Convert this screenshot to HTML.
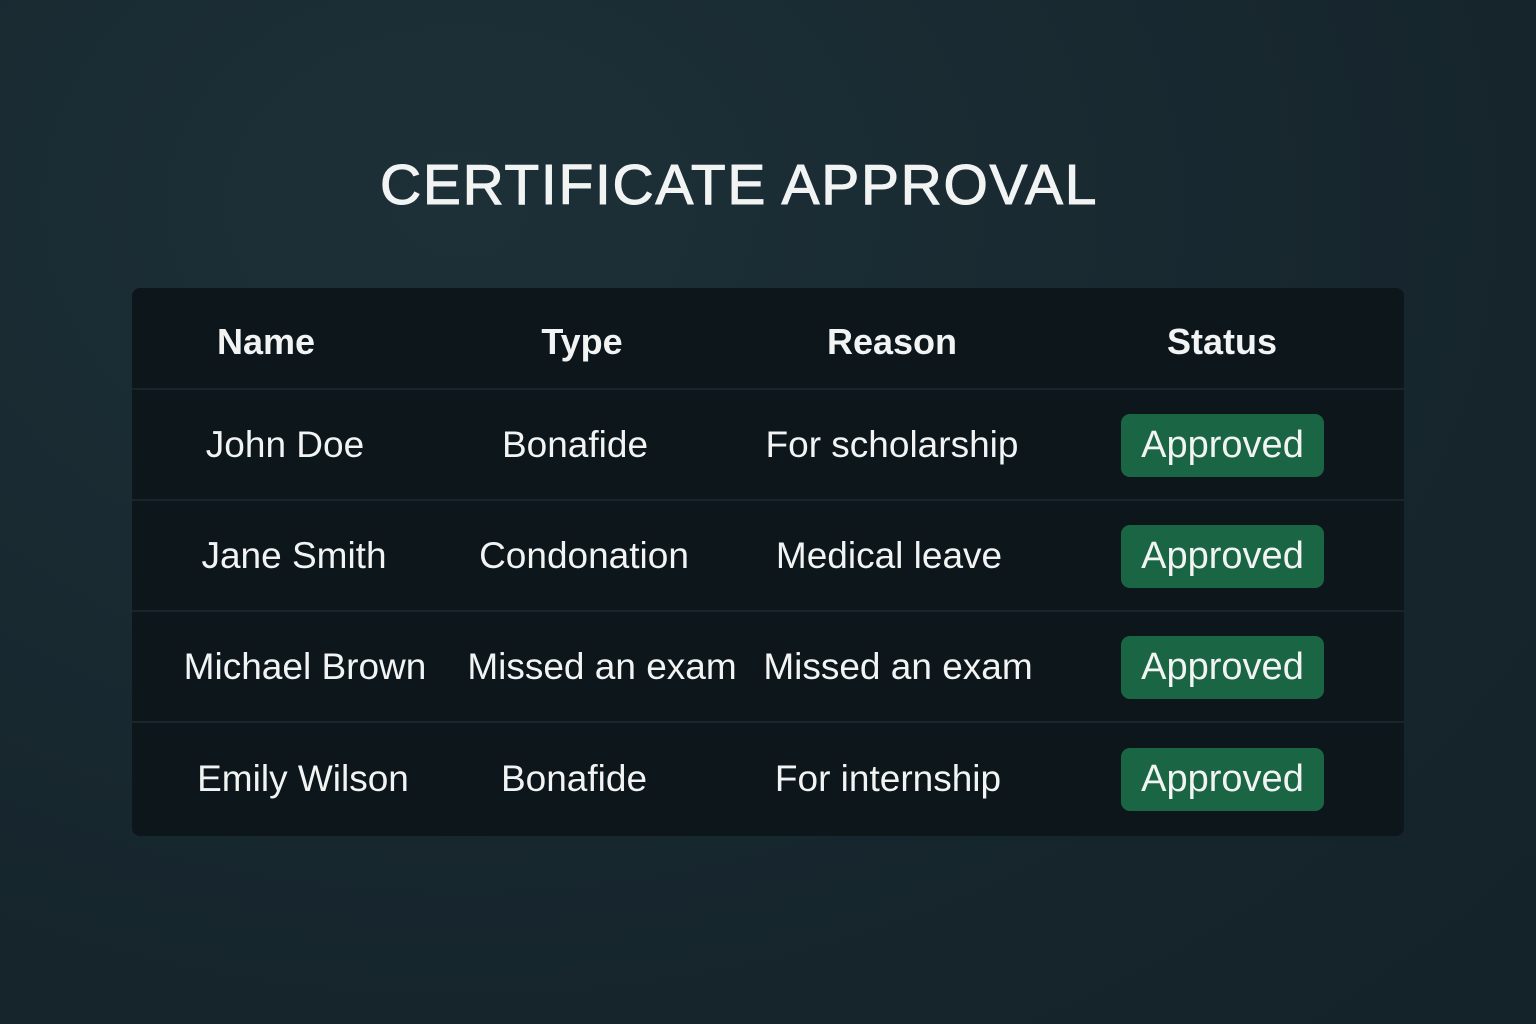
<!DOCTYPE html>
<html><head><style>
html,body{margin:0;padding:0}
body{width:1536px;height:1024px;background:radial-gradient(ellipse at 30% 20%,#1d3038,#16252c 70%,#14222a);font-family:"Liberation Sans",sans-serif;color:#f2f4f4;position:relative;overflow:hidden}
h1{position:absolute;left:380px;top:150px;margin:0;font-size:57px;font-weight:400;letter-spacing:1.7px;line-height:70px;white-space:nowrap;-webkit-text-stroke:1px #f2f4f4}
.tbl{position:absolute;left:132px;top:288px;width:1272px;height:548px;background:#0c161b;border-radius:8px;overflow:hidden}
.row{position:absolute;left:0;width:1272px;border-top:2px solid #18262c}
.c{position:absolute;top:0;height:100%;display:flex;align-items:center;justify-content:center;font-size:37px;white-space:nowrap}
.h .c{font-weight:700;font-size:36px;top:4px}
.badge{background:#1a6644;border-radius:9px;width:203px;height:63px;display:flex;align-items:center;justify-content:center;font-size:38px}
</style></head><body>
<h1>CERTIFICATE APPROVAL</h1>
<div class="tbl">
<div class="row h" style="top:0;height:100px;border-top:none">
<div class="c" style="left:34px;width:200px">Name</div>
<div class="c" style="left:350px;width:200px">Type</div>
<div class="c" style="left:660px;width:200px">Reason</div>
<div class="c" style="left:990px;width:200px">Status</div>
</div>
<div class="row" style="top:100px;height:110px">
<div class="c" style="left:53px;width:200px">John Doe</div>
<div class="c" style="left:343px;width:200px">Bonafide</div>
<div class="c" style="left:660px;width:200px">For scholarship</div>
<div class="c" style="left:989px;width:203px"><div class="badge">Approved</div></div>
</div>
<div class="row" style="top:211px;height:110px">
<div class="c" style="left:62px;width:200px">Jane Smith</div>
<div class="c" style="left:352px;width:200px">Condonation</div>
<div class="c" style="left:657px;width:200px">Medical leave</div>
<div class="c" style="left:989px;width:203px"><div class="badge">Approved</div></div>
</div>
<div class="row" style="top:322px;height:110px">
<div class="c" style="left:73px;width:200px">Michael Brown</div>
<div class="c" style="left:370px;width:200px">Missed an exam</div>
<div class="c" style="left:666px;width:200px">Missed an exam</div>
<div class="c" style="left:989px;width:203px"><div class="badge">Approved</div></div>
</div>
<div class="row" style="top:433px;height:112px">
<div class="c" style="left:71px;width:200px">Emily Wilson</div>
<div class="c" style="left:342px;width:200px">Bonafide</div>
<div class="c" style="left:656px;width:200px">For internship</div>
<div class="c" style="left:989px;width:203px"><div class="badge">Approved</div></div>
</div>
</div>
</body></html>
